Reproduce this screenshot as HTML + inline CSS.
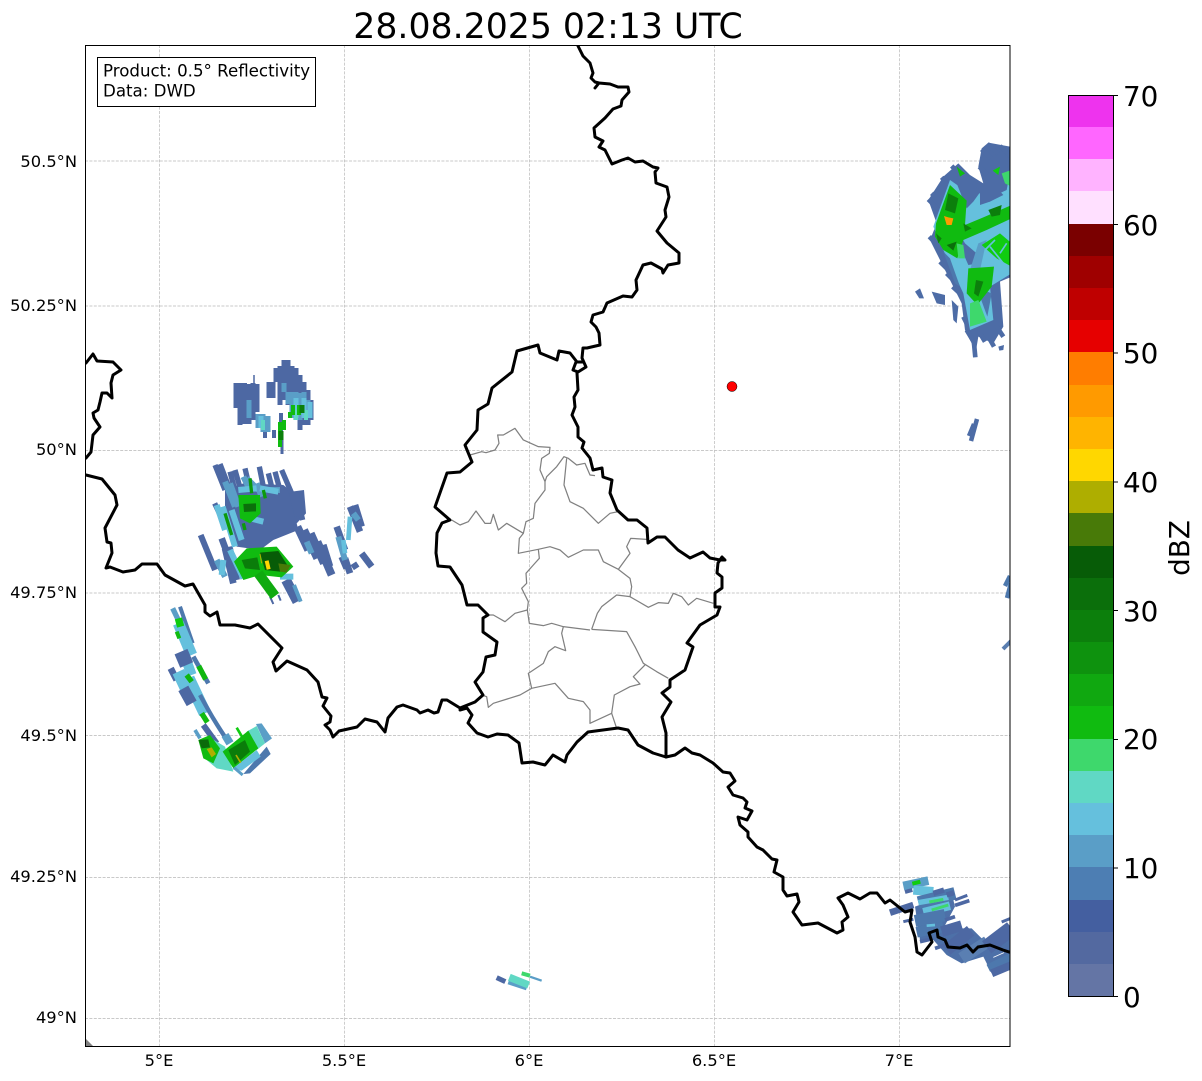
<!DOCTYPE html>
<html><head><meta charset="utf-8"><style>
html,body{margin:0;padding:0;background:#fff}
svg{display:block}
text{font-family:"DejaVu Sans","Liberation Sans",sans-serif;fill:#000}
.g{stroke:#b8b8b8;stroke-width:.7;stroke-dasharray:3 1.4;fill:none}
.b{fill:none;stroke:#000;stroke-width:3;stroke-linejoin:round;stroke-linecap:round}
.s{fill:none;stroke-linecap:butt;stroke-linejoin:miter}
</style></head><body>
<svg width="1202" height="1081" viewBox="0 0 1202 1081" xmlns="http://www.w3.org/2000/svg">
<defs><clipPath id="ax"><rect x="85.5" y="45.5" width="924.5" height="1001"/></clipPath></defs>
<rect width="1202" height="1081" fill="#fff"/>
<text x="548" y="38" font-size="34.7" text-anchor="middle">28.08.2025 02:13 UTC</text>
<path class="g" d="M159.5 45V1046M344.5 45V1046M529.5 45V1046M714.5 45V1046M899.5 45V1046M85 161H1010M85 306H1010M85 450.5H1010M85 593H1010M85 735.5H1010M85 877.5H1010M85 1018.5H1010"/>
<g clip-path="url(#ax)">
<!-- top blob -->
<g class="s" stroke="#4d68a3" stroke-width="5">
<path d="M236 383V408M240 383V425M244.500 383V424M249 384V424M253 383V420M257 384V412"/>
<path d="M269 382V398M273 382V398M276 368V382M280 366V405M284 360V400M288 360V405M292 366V410M296 368V415M300 375V430M304 382V425M308 390V425M311 400V420"/>
<path d="M281 413V440M274 430V438M265 428V438" stroke-width="4"/>
<path d="M282 440V454" stroke-width="3"/>
<path d="M254 375V386" stroke-width="1.500"/>
</g>
<g class="s">
<path stroke="#5a9ec7" stroke-width="5" d="M249 400V418M284 383V392M288 392V404M292 392V418M296 392V420M300 393V420M304 392V417M308 400V417"/>
<path stroke="#5a9ec7" stroke-width="5" d="M258 414V428M263 414V432M268 416V432"/>
<path stroke="#65c0dd" stroke-width="5" d="M261 416V428M296 398V418M304 398V418M310 402V418"/>
<path stroke="#60d8c4" stroke-width="4" d="M263 420V430M296 410V420M306 410V420"/>
<path stroke="#10bb10" stroke-width="4" d="M280 422V447M284 420V430M293 405V415M299 405V415M290 412V418"/>
<path stroke="#0c7f0c" stroke-width="5" d="M302 405V413M281 431V440"/>
</g>
<!-- big blob -->
<g transform="translate(180 350) scale(.33333)">
<polygon fill="#4d68a3" points="135,420 190,400 310,405 335,425 372,420 378,490 350,520 355,540 280,570 240,600 170,590 135,500"/>
<g class="s" stroke="#4d68a3" stroke-width="16">
<path d="M105 345L135 420M120 342L150 420M150 365L170 440M165 360L185 430M195 355L215 440M238 350L250 410M265 370L275 410M285 365L300 420M305 360L335 430"/>
<path d="M348 430L368 510M335 430L352 500M104 460L118 490" />
<path d="M372 540L412 625M392 550L432 640M412 575L455 675M428 585L448 650M352 530L385 600" stroke-width="24"/>
<path d="M470 530L495 600M485 620L500 655M510 470L540 545M525 465L545 530M545 610L575 650M520 640L530 655M495 625L510 670" stroke-width="20"/>
<path d="M62 555L105 660" stroke-width="18"/>
<path d="M135 595L160 700M148 590L170 690M125 565L138 600" stroke-width="20"/>
<path d="M318 690L352 755" stroke-width="30"/>
<path d="M270 740L280 762M295 735L302 752" stroke-width="6"/>
</g>
<g class="s" stroke="#5a9ec7" stroke-width="18">
<path d="M135 395L165 470M150 400L175 470M200 385L235 420M265 420L300 420M190 380L210 420M230 400L245 440"/>
<path d="M380 575L395 610M475 560L495 630M110 630L135 680M520 490L535 510"/>
<path d="M342 705L362 755" stroke-width="12"/>
</g>
<g class="s" stroke="#65c0dd" stroke-width="18">
<path d="M110 465L135 540M128 470L165 590M155 480L185 570M175 420L230 415M240 415L295 425M250 515L190 500M150 600L190 685M300 680L340 680M130 630L125 675"/>
<path d="M510 500L505 570M490 570L495 610" stroke-width="14"/>
</g>
<polygon fill="#10bb10" points="175,435 240,435 242,490 210,520 180,505"/>
<path class="s" stroke="#0c9a0c" stroke-width="10" d="M210 385L215 430M250 420L256 445M190 520L195 540M135 490L155 555"/>
<polygon fill="#0b6f0b" points="190,462 228,460 228,484 192,486"/>
<polygon fill="#10bb10" points="162,635 200,595 290,590 340,650 305,682 240,675 190,690"/>
<path class="s" stroke="#10aa10" stroke-width="30" d="M235 670L285 738"/>
<polygon fill="#0a7d0a" points="185,630 232,622 240,660 195,655"/>
<polygon fill="#075c07" points="240,608 295,603 325,650 300,665 255,660"/>
<polygon fill="#487a08" points="295,640 332,645 320,668 300,665"/>
<path class="s" stroke="#ffd700" stroke-width="12" d="M260 632L266 658"/>
<path class="s" stroke="#aeae00" stroke-width="3" d="M240 612L245 640"/>
</g>
<!-- west strip blob -->
<g transform="translate(150 600) scale(.33333)">
<g class="s">
<path stroke="#5a9ec7" stroke-width="16" d="M68 25L85 60"/>
<path stroke="#4d78ad" stroke-width="12" d="M90 20L128 130"/>
<path stroke="#65c0dd" stroke-width="34" d="M85 70L125 165"/>
<path stroke="#10cc10" stroke-width="22" d="M85 55L92 80"/>
<path stroke="#10bb10" stroke-width="12" d="M80 95L88 115"/>
<path stroke="#65c0dd" stroke-width="30" d="M105 170L125 225"/>
<path stroke="#4d68a3" stroke-width="42" d="M93 155L110 195"/>
<path stroke="#4d68a3" stroke-width="20" d="M62 205L80 240"/>
<path stroke="#65c0dd" stroke-width="38" d="M85 215L125 300M115 235L165 340"/>
<path stroke="#4d78ad" stroke-width="14" d="M130 170L175 250"/>
<path stroke="#0fb60f" stroke-width="16" d="M146 198L167 238M110 225L125 245"/>
<path stroke="#4d68a3" stroke-width="34" d="M100 265L125 310"/>
<path stroke="#4d78ad" stroke-width="13" d="M150 285C180 340 200 375 238 430"/>
<path stroke="#10bb10" stroke-width="16" d="M155 340L172 367"/>
<path stroke="#5a9ec7" stroke-width="11" d="M135 390L150 415"/>
<path stroke="#4d68a3" stroke-width="18" d="M160 375L200 430"/>
<path stroke="#5a9ec7" stroke-width="24" d="M225 405L240 430"/>
<path stroke="#10cc10" stroke-width="8" d="M260 383L276 410"/>
</g>
<polygon fill="#60d8c4" points="175,410 225,440 250,515 200,505 170,480"/>
<polygon fill="#10bb10" points="145,420 180,405 210,445 190,490 160,475"/>
<polygon fill="#0a6a0a" points="146,420 175,418 180,442 155,445"/>
<polygon fill="#aeae00" points="170,447 185,442 198,462 185,472"/>
<polygon fill="#5a9ec7" points="318,372 335,370 366,415 345,430"/>
<polygon fill="#60d8c4" points="290,395 320,378 345,430 320,450"/>
<polygon fill="#10bb10" points="218,455 295,392 325,445 250,505"/>
<polygon fill="#0a7d0a" points="235,450 285,420 300,455 255,495"/>
<polygon fill="#4d78ad" points="280,522 350,440 362,462 300,520"/>
<polygon fill="#65c0dd" points="240,512 320,450 332,470 275,512 240,507"/>
<path class="s" stroke="#aeae00" stroke-width="5" d="M258 465L272 488"/>
<path class="s" stroke="#5a9ec7" stroke-width="9" d="M252 503L278 525"/>
</g>
<!-- NE blob -->
<g transform="translate(900 130) scale(.33333)">
<polygon fill="#4d6ca6" points="245,55 265,38 330,50 335,440 300,455 310,590 280,640 235,620 225,680 215,640 195,600 185,520 130,410 90,330 110,280 85,210 130,140 175,100 210,135 250,160 235,110"/>
<path class="s" stroke="#4d6ca6" stroke-width="14" d="M85 208L115 238M95 190L125 220M125 142L152 172M155 108L185 138M238 110L262 135M245 58L272 85M262 42L295 72M300 48L330 78M88 320L112 345M120 395L145 420M140 430L165 455M158 470L185 495M190 560L205 590M200 600L218 630M222 640L226 682M240 610L255 635M268 625L282 650M290 590L310 620"/>
<polygon fill="#65c0dd" points="100,290 150,150 200,185 240,190 255,210 320,180 335,100 335,430 270,470 280,570 210,600 190,490 130,360"/>
<polygon fill="#4d6ca6" points="190,140 210,160 245,180 220,215 200,235 170,160"/>
<polygon fill="#4d6ca6" points="240,165 270,150 310,195 270,215 240,225"/>
<polygon fill="#4d6ca6" points="178,310 195,340 230,370 235,400 205,405 185,360"/>
<polygon fill="#4d78ad" points="250,480 275,490 262,560 240,500"/>
<polygon fill="#4d78ad" points="130,365 150,385 180,470 165,460"/>
<polygon fill="#5a9ec7" points="210,420 235,340 260,330 240,420"/>
<polygon fill="#10bb10" points="108,280 150,165 200,212 195,285 250,262 335,225 335,265 260,300 190,330 172,385 130,360 105,320"/>
<polygon fill="#10bb10" points="205,415 282,410 275,470 232,525 200,490"/>
<polygon fill="#10cc10" points="245,345 300,310 335,340 335,410 290,385"/>
<polygon fill="#3ed86c" points="170,340 190,345 195,385 175,385"/>
<polygon fill="#3ed86c" points="210,520 235,510 260,575 210,590"/>
<polygon fill="#10cc10" points="278,122 300,110 295,135"/>
<polygon fill="#10bb10" points="170,110 195,130 180,140"/>
<polygon fill="#3ed86c" points="305,130 335,120 335,170 315,160"/>
<polygon fill="#0c7f0c" points="145,190 175,205 165,250 135,240"/>
<polygon fill="#0c7f0c" points="108,310 125,325 115,340"/>
<polygon fill="#0b6f0b" points="140,345 170,335 160,362"/>
<polygon fill="#0c7f0c" points="190,280 215,295 195,305"/>
<polygon fill="#0c7f0c" points="228,450 250,455 235,500 222,490"/>
<polygon fill="#0c7f0c" points="265,240 305,225 300,255 275,260"/>
<path class="s" stroke="#65c0dd" stroke-width="5" d="M255 360L285 330M300 370L320 340M270 350L310 400"/>
<polygon fill="#ff9a00" points="132,258 145,262 160,265 155,285 140,285"/>
<polygon fill="#4d6ca6" points="45,485 60,475 72,505 58,505"/>
<polygon fill="#4d6ca6" points="95,485 135,495 135,525 110,520"/>
<polygon fill="#4d6ca6" points="155,510 175,530 170,580 160,570"/>
<polygon fill="#4d6ca6" points="295,650 312,645 310,660 298,662"/>
</g>
<!-- small cells -->
<g class="s">
<path stroke="#4d6ca6" stroke-width="4.500" d="M977 419L971 441M974 424L969 436"/>
<path stroke="#4d78ad" stroke-width="4.500" d="M1010 576L1005 586M1011 583L1007 598"/>
<path stroke="#5a7eb0" stroke-width="4" d="M1003 649L1011 641"/>
</g>
<polygon fill="#808080" points="85,1038 93,1046 85,1046"/>
<g transform="translate(480 960) scale(.33333)" class="s">
<path stroke="#4d68a3" stroke-width="15" d="M50 53L76 65"/>
<path stroke="#5a9ec7" stroke-width="14" d="M85 66L140 84"/>
<path stroke="#60d8c4" stroke-width="22" d="M88 52L146 75"/>
<path stroke="#3ed86c" stroke-width="12" d="M125 40L150 47"/>
<path stroke="#5a9ec7" stroke-width="7" d="M150 50L185 62"/>
</g>
<!-- SE blob -->
<g transform="translate(880 860) scale(.33333)">
<polygon fill="#4d70a8" points="105,140 215,100 225,140 190,205 275,205 320,250 385,200 395,310 335,340 310,290 245,310 200,285 160,240 120,240"/>
<g class="s">
<path stroke="#5a9ec7" stroke-width="26" d="M70 78L145 62"/>
<path stroke="#65c0dd" stroke-width="28" d="M100 90L160 95"/>
<path stroke="#10cc10" stroke-width="12" d="M97 71L121 65"/>
<path stroke="#4d68a3" stroke-width="12" d="M75 96L97 90"/>
<path stroke="#4d68a3" stroke-width="20" d="M30 158L100 135"/>
<path stroke="#4d78ad" stroke-width="38" d="M115 128L225 100"/>
<path stroke="#65c0dd" stroke-width="16" d="M115 128L205 112"/>
<path stroke="#4d68a3" stroke-width="16" d="M160 100L192 90M200 105L222 98"/>
<path stroke="#65c0dd" stroke-width="26" d="M130 157L210 137"/>
<path stroke="#3ed86c" stroke-width="9" d="M155 150L205 135M148 126L190 118"/>
<path stroke="#4d78ad" stroke-width="36" d="M105 183L195 165"/>
<path stroke="#4d78ad" stroke-width="32" d="M110 217L190 200"/>
<path stroke="#4d68a3" stroke-width="9" d="M225 120L262 106M70 185L100 178"/>
<path stroke="#4d68a3" stroke-width="11" d="M225 136L268 122M195 180L225 170M120 245L150 238M165 265L195 255"/>
<path stroke="#65c0dd" stroke-width="8" d="M140 197L165 195"/>
<path stroke="#4d68a3" stroke-width="32" d="M185 215L245 197"/>
<path stroke="#4d68a3" stroke-width="36" d="M200 270L272 212"/>
<path stroke="#5a7fb2" stroke-width="36" d="M245 295L322 245"/>
<path stroke="#4d68a3" stroke-width="46" d="M320 262L395 205"/>
<path stroke="#4d78ad" stroke-width="24" d="M325 325L395 290"/>
<path stroke="#4d68a3" stroke-width="24" d="M335 340L395 315"/>
<path stroke="#4d68a3" stroke-width="9" d="M365 186L392 175"/>
<path stroke="#fff" stroke-width="2.500" d="M340 292L372 278"/>
</g>
</g>
<!-- grey admin lines -->
<g transform="translate(420 330) scale(.33333)" fill="none" stroke="#808080" stroke-width="3.700" stroke-linejoin="round">
<path d="M150 375L185 365L198 368L225 360L237 340L233 315L250 315L285 295L310 330L355 350L390 352L388 370L365 385L360 420L375 455"/>
<path d="M375 455L380 440L410 410L432 380L445 385L470 405L495 400L510 435L525 437"/>
<path d="M440 385L432 465L450 515L490 535L535 580L570 550L595 545"/>
<path d="M375 455L375 480L345 520L340 565L318 575L310 610"/>
<path d="M95 570L120 585L145 575L168 543L195 580L212 580L220 553L235 600L260 580L310 610L298 625L295 670L355 658L390 650L420 660L445 682L490 660L535 660L550 695L595 718L630 745L635 770L630 800"/>
<path d="M355 658L358 685L340 705L318 730L320 760L305 775L325 815L322 840L285 850L255 875L220 855L205 855"/>
<path d="M322 840L328 880L370 887L395 880L430 890L510 900"/>
<path d="M630 800L590 795L545 830L532 850L515 898"/>
<path d="M630 800L685 832L715 818L745 820L760 790L785 800L805 825L830 805L880 820"/>
<path d="M430 890L425 910L437 962L405 950L385 965L370 1000L325 1030L335 1075"/>
<path d="M515 898L620 905L645 950L670 1000L710 1025L745 1045"/>
<path d="M675 1005L640 1040L660 1062L630 1070L583 1095L575 1150L590 1195"/>
<path d="M575 1150L510 1180L510 1140L490 1115L445 1105L405 1060L335 1075L300 1095L220 1120L205 1132L200 1100L185 1095"/>
<path d="M595 718L630 670L620 650L632 625L680 628"/>
</g>
<!-- national borders -->
<path class="b" d="M578 46L583 56L590 63L593 73L591 78L595 82L599 83L595 88L599 83L610 84L618 87L628 87L629 92L622 100L621 106L613 109L605 118L594 128L595 137L603 141L599 147L605 150L612 164L622 160L628 158L635 162L643 161L653 167L658 168L655 172L656 183L667 187L669 197L665 210L666 217L657 231L667 243L679 253L679 263L668 265L663 273L662 269L651 263L643 265L636 280L637 290L632 297L623 296L607 303L603 312L593 315L591 322L596 327L599 333L600 345L587 348L583 348L582 358L586 367L578 372L573 370L576 362L583 362M577 373L578 390L574 397L575 407L572 415L578 427L578 437L584 442L582 448L590 458L593 470L602 468L603 477L612 480L610 493L617 510L628 520L637 520L647 528L648 543L657 537L665 537L678 550L690 558L703 552L710 558L720 560L725 560L722 557L718 563L717 573L722 577L722 588L715 593L715 607L720 607L717 615L700 625L687 643L693 647L685 670L670 680L670 687L662 693L671 702L662 717L666 733L666 757"/>
<path class="b" d="M666 757L653 753L638 745L628 730L618 728L588 732L577 742L567 755L565 762L553 755L545 765L533 762L522 763L519 743L508 735L497 734L488 737L477 733L468 723L472 715L467 708L460 710"/>
<path class="b" d="M460 708L475 702L483 695L475 682L483 672L486 657L495 655L497 642L483 632L483 618L488 615L478 605L467 605L462 585L450 567L438 566L436 553L437 533L442 523L450 520L435 507L447 473L460 472L472 462L465 445L477 430L478 410L488 404L492 388L512 372L517 351L538 345L540 353L557 360L559 351L570 353L577 362"/>
<path class="b" d="M86 363L93 354L97 361L113 362L121 370L113 375L111 383L112 398L107 393L102 393L100 402L98 410L93 413L94 418L100 427L93 435L91 452L86 458"/>
<path class="b" d="M86 475L102 479L115 495L117 505L105 528L107 542L111 543L112 553L106 568L110 567L123 572L135 570L142 564L157 564L165 575L185 586L193 584L205 605L205 612L210 616L217 612L220 625L235 625L250 628L258 624L282 648L273 662L276 671L287 661L307 670L318 682L322 697L327 698L323 706L331 716L330 722L325 725L330 730L333 737L339 731L357 727L365 719L377 722L385 732L388 718L397 707L403 705L417 710L420 713L428 710L434 713L438 712L442 700L447 700L460 708"/>
<path class="b" d="M666 757L675 755L685 748L692 753L700 755L713 763L723 772L730 773L735 781L728 787L733 795L743 798L747 802L745 808L752 811L747 820L738 817L740 825L748 832L748 837L757 847L763 850L772 859L777 860L774 872L783 877L783 890L787 896L797 894L799 902L793 912L802 925L818 923L837 933L843 930L842 922L848 917L843 905L838 898L848 893L860 899L870 893L877 893L885 903L890 900L905 912L912 910L910 922L915 937L917 952L922 955L932 942L929 933L937 930L938 937L945 940L948 947L960 948L967 945L973 952L978 947L990 945L1003 950L1012 953"/>
<circle cx="732" cy="386.500" r="5" fill="#f00" stroke="#000" stroke-width=".5"/>
</g>
<rect x="85.500" y="45.500" width="924.500" height="1001" fill="none" stroke="#000" stroke-width="1"/>
<rect x="97.500" y="57.500" width="218" height="49" fill="#fff" stroke="#000" stroke-width="1"/>
<text x="103" y="76.500" font-size="16.650">Product: 0.5° Reflectivity</text>
<text x="103" y="96.500" font-size="16.650">Data: DWD</text>
<g font-size="16.300" text-anchor="end">
<text x="77" y="167">50.5°N</text><text x="77" y="311">50.25°N</text><text x="77" y="455">50°N</text><text x="77" y="598">49.75°N</text><text x="77" y="741">49.5°N</text><text x="77" y="882">49.25°N</text><text x="77" y="1023">49°N</text>
</g>
<g font-size="16.300" text-anchor="middle">
<text x="159" y="1066">5°E</text><text x="344" y="1066">5.5°E</text><text x="529" y="1066">6°E</text><text x="714" y="1066">6.5°E</text><text x="899" y="1066">7°E</text>
</g>
<!-- colorbar -->
<g>
<rect x="1068" y="95" width="45" height="33" fill="#ee33ee"/>
<rect x="1068" y="127" width="45" height="33" fill="#ff66ff"/>
<rect x="1068" y="159" width="45" height="33" fill="#ffb3ff"/>
<rect x="1068" y="191" width="45" height="33" fill="#ffe0ff"/>
<rect x="1068" y="224" width="45" height="33" fill="#7a0000"/>
<rect x="1068" y="256" width="45" height="33" fill="#9f0000"/>
<rect x="1068" y="288" width="45" height="33" fill="#bf0000"/>
<rect x="1068" y="320" width="45" height="33" fill="#e60000"/>
<rect x="1068" y="352" width="45" height="33" fill="#ff7d00"/>
<rect x="1068" y="385" width="45" height="33" fill="#ff9a00"/>
<rect x="1068" y="417" width="45" height="33" fill="#ffb400"/>
<rect x="1068" y="449" width="45" height="33" fill="#ffd700"/>
<rect x="1068" y="481" width="45" height="33" fill="#aeae00"/>
<rect x="1068" y="513" width="45" height="34" fill="#487a08"/>
<rect x="1068" y="546" width="45" height="33" fill="#075c07"/>
<rect x="1068" y="578" width="45" height="33" fill="#0b6f0b"/>
<rect x="1068" y="610" width="45" height="33" fill="#0c7f0c"/>
<rect x="1068" y="642" width="45" height="33" fill="#0e920e"/>
<rect x="1068" y="674" width="45" height="33" fill="#10a810"/>
<rect x="1068" y="706" width="45" height="33" fill="#10bb10"/>
<rect x="1068" y="739" width="45" height="33" fill="#3ed86c"/>
<rect x="1068" y="771" width="45" height="33" fill="#60d8c4"/>
<rect x="1068" y="803" width="45" height="33" fill="#65c0dd"/>
<rect x="1068" y="835" width="45" height="33" fill="#5a9ec7"/>
<rect x="1068" y="867" width="45" height="33" fill="#4d7eb3"/>
<rect x="1068" y="900" width="45" height="33" fill="#445fa0"/>
<rect x="1068" y="932" width="45" height="33" fill="#5369a0"/>
<rect x="1068" y="964" width="45" height="33" fill="#6475a5"/>
</g>
<rect x="1068.500" y="95.500" width="45" height="901" fill="none" stroke="#000" stroke-width="1"/>
<path stroke="#000" stroke-width="1" d="M1113 95.500h5M1113 224.500h5M1113 353h5M1113 482h5M1113 610.500h5M1113 739.500h5M1113 868h5M1113 996.500h5"/>
<g font-size="27.800">
<text x="1123" y="106">70</text><text x="1123" y="235">60</text><text x="1123" y="363">50</text><text x="1123" y="492">40</text><text x="1123" y="621">30</text><text x="1123" y="749">20</text><text x="1123" y="878">10</text><text x="1123" y="1007">0</text>
</g>
<text transform="translate(1189 548) rotate(-90)" font-size="27.800" text-anchor="middle">dBZ</text>
</svg>
</body></html>
